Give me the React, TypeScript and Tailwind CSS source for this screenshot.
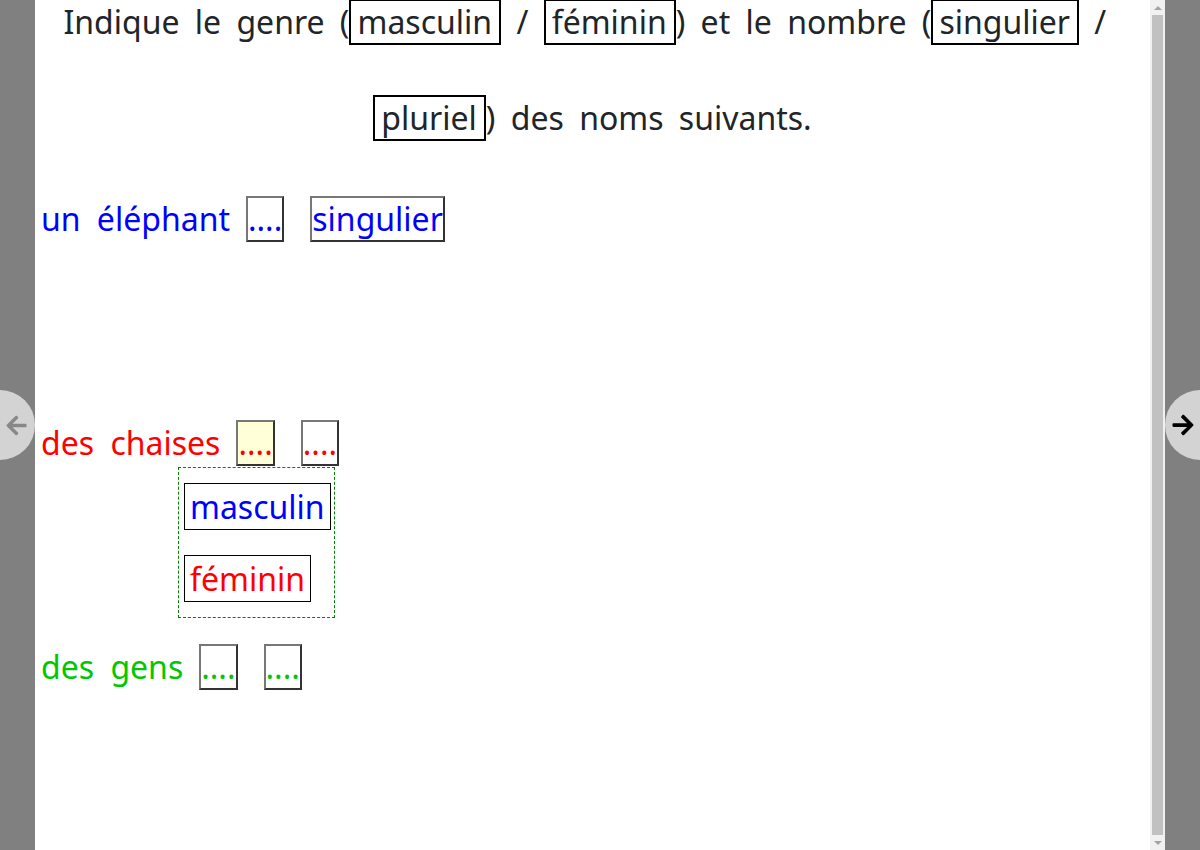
import { FaArrowLeft, FaArrowRight } from 'react-icons/fa';

const font = { fontFamily: '"Noto Sans", "Open Sans", sans-serif' };

function TitleBox({ children }: { children: React.ReactNode }) {
  return (
    <span className="inline-block border-2 border-black pl-[6px] pr-[7px] leading-[42px] [word-spacing:0]">
      {children}
    </span>
  );
}

function Slot({ children, color, active }: { children: React.ReactNode; color: string; active?: boolean }) {
  return (
    <span
      className={`inline-block border-2 border-t-[#777] border-l-[#777] border-b-[#333] border-r-[#333] leading-[42px] ${color} ${
        active ? 'bg-[#ffffd8]' : 'bg-white'
      }`}
    >
      {children}
    </span>
  );
}

const rows = [
  { word: 'un éléphant', color: 'text-[#0000ff]', first: '....', second: 'singulier' },
  { word: 'des chaises', color: 'text-[#ff0000]', first: '....', second: '....', open: true },
  { word: 'des gens', color: 'text-[#00c800]', first: '....', second: '....' },
];

export default function App() {
  return (
    <div className="relative flex h-[850px] w-[1200px] overflow-hidden bg-[#808080] text-[32px]" style={font}>
      <div className="w-[35px] shrink-0" />

      <main className="flex-1 overflow-hidden bg-white pl-[6px]">
        <p className="-ml-[6px] -mt-[26px] text-center leading-[96px] text-[#212529] [word-spacing:7px]">
          Indique le genre (<TitleBox>masculin</TitleBox> / <TitleBox>féminin</TitleBox>) et le nombre (
          <TitleBox>singulier</TitleBox> {'/\u00a0'}
          <br />
          <TitleBox>pluriel</TitleBox>) des noms suivants.
        </p>

        <div className="mt-[30px] flex flex-col gap-[178px]">
          {rows.map((row) => (
            <div key={row.word} className={`relative flex h-[46px] items-center ${row.color}`}>
              <span className="[word-spacing:8px]">{row.word}</span>
              <span className="ml-[16px]">
                <Slot color={row.color} active={row.open}>
                  {row.first}
                </Slot>
              </span>
              <span className="ml-[26px]">
                <Slot color={row.color}>{row.second}</Slot>
              </span>

              {row.open && (
                <div className="absolute left-[137px] top-[47px] z-10 flex w-[157px] flex-col items-start gap-[25px] border border-dashed border-[#008000] bg-white px-[5px] pb-[15px] pt-[15px]">
                  <span className="border border-black px-[5px] leading-[45px] text-[#0000ff]">masculin</span>
                  <span className="border border-black px-[5px] leading-[45px] text-[#ff0000]">féminin</span>
                </div>
              )}
            </div>
          ))}
        </div>
      </main>

      <div className="flex w-[15px] shrink-0 flex-col bg-[#f1f1f1]">
        <div className="flex h-[15px] items-center justify-center">
          <span className="h-0 w-0 border-x-[4px] border-b-[4px] border-x-transparent border-b-[#a3a3a3]" />
        </div>
        <div className="mx-[2px] flex-1 bg-[#c1c1c1]" />
        <div className="flex h-[15px] items-center justify-center">
          <span className="h-0 w-0 border-x-[4px] border-t-[4px] border-x-transparent border-t-[#a3a3a3]" />
        </div>
      </div>

      <div className="w-[35px] shrink-0" />

      <button className="absolute left-[-35px] top-[390px] flex h-[70px] w-[70px] items-center justify-end rounded-full bg-[#d3d3d3] pr-[7px] text-[#888]">
        <FaArrowLeft size={23} />
      </button>
      <button className="absolute right-[-35px] top-[390px] flex h-[70px] w-[70px] items-center justify-start rounded-full bg-[#d3d3d3] pl-[6px] text-black">
        <FaArrowRight size={24} />
      </button>
    </div>
  );
}
